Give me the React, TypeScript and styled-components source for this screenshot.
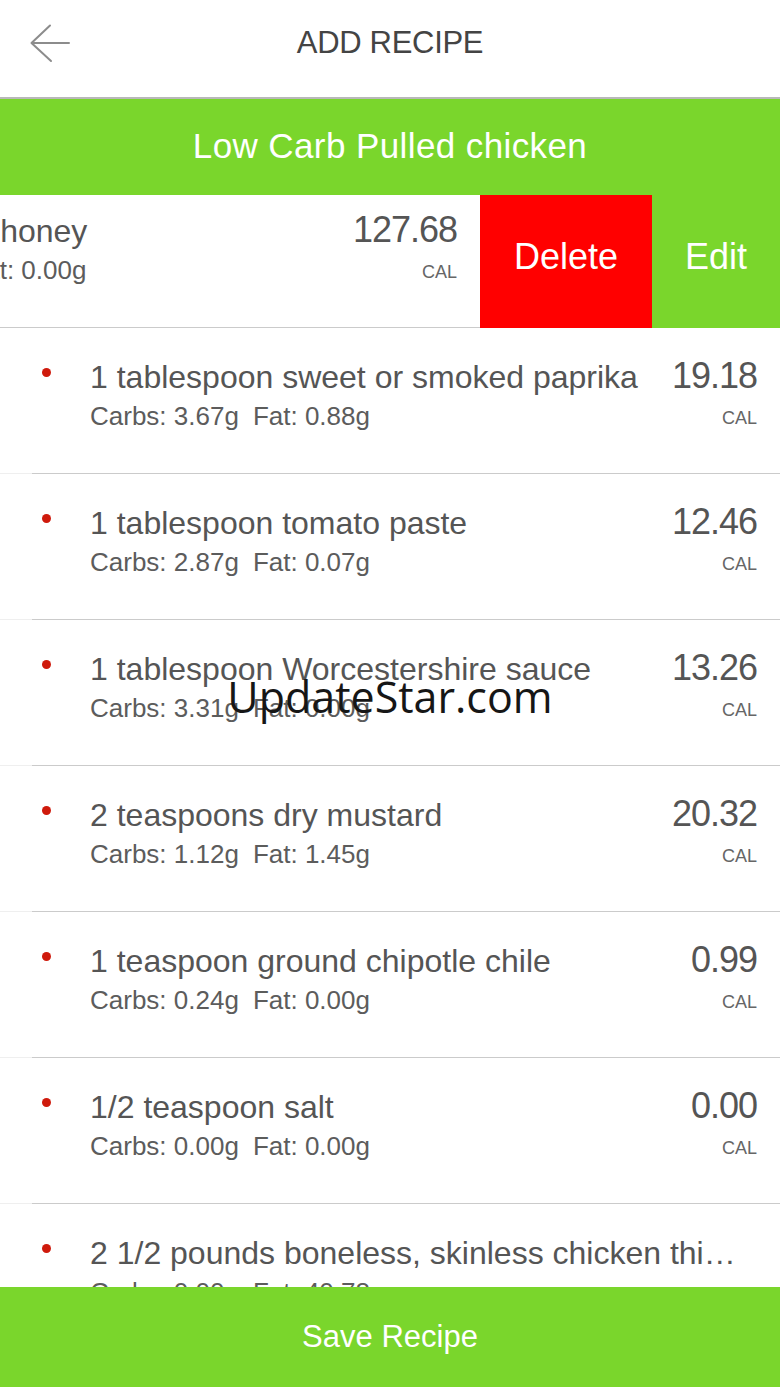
import React from 'react';
import styled, { createGlobalStyle } from 'styled-components';

const GREEN = '#7ad62c';

interface Ingredient {
	name: string;
	carbs: string;
	fat: string;
	cal?: string;
}

const swiped: Ingredient = { name: '2 tablespoons honey', carbs: '34.60g', fat: '0.00g', cal: '127.68' };

const ingredients: Ingredient[] = [
	{ name: '1 tablespoon sweet or smoked paprika', carbs: '3.67g', fat: '0.88g', cal: '19.18' },
	{ name: '1 tablespoon tomato paste', carbs: '2.87g', fat: '0.07g', cal: '12.46' },
	{ name: '1 tablespoon Worcestershire sauce', carbs: '3.31g', fat: '0.00g', cal: '13.26' },
	{ name: '2 teaspoons dry mustard', carbs: '1.12g', fat: '1.45g', cal: '20.32' },
	{ name: '1 teaspoon ground chipotle chile', carbs: '0.24g', fat: '0.00g', cal: '0.99' },
	{ name: '1/2 teaspoon salt', carbs: '0.00g', fat: '0.00g', cal: '0.00' },
	{ name: '2 1/2 pounds boneless, skinless chicken thighs, trimmed', carbs: '0.00g', fat: '40.78g' }
];

const GlobalStyle = createGlobalStyle`
  html, body { margin: 0; padding: 0; background: #fff; }
  body { font-family: "Liberation Sans", Arial, sans-serif; }
`;

const Screen = styled.div`
  position: relative;
  width: 780px;
  height: 1387px;
  display: flex;
  flex-direction: column;
  overflow: hidden;
  background: #fff;
`;

const Header = styled.header`
  flex: 0 0 97px;
  display: grid;
  grid-template-columns: 120px 1fr 120px;
  align-items: center;
  border-bottom: 2px solid #b8b8b8;
`;

const BackButton = styled.button`
  justify-self: start;
  margin: 0 0 10px 30px;
  padding: 0;
  border: 0;
  background: none;
  width: 40px;
  height: 40px;
  display: flex;
`;

const Title = styled.h1`
  margin: 0 0 12px;
  text-align: center;
  font-weight: 400;
  font-size: 31px;
  letter-spacing: -0.3px;
  color: #444;
`;

const RecipeBar = styled.div`
  flex: 0 0 96px;
  display: flex;
  align-items: center;
  justify-content: center;
  background: ${GREEN};
  color: #fff;
  font-size: 35px;
  letter-spacing: 0.4px;
  padding-bottom: 2px;
  box-sizing: border-box;
  position: relative;
  z-index: 1;
`;

const List = styled.div`
  flex: 1;
  overflow: hidden;
`;

const Scroller = styled.div`
  margin-top: -13px;
`;

const SwipeRow = styled.div`
  display: flex;
  height: 146px;
  overflow: hidden;
`;

const SwipeContent = styled.div`
  flex: 0 0 778px;
  margin-left: -298px;
`;

const ActionButton = styled.button<{ $bg: string; $w: number }>`
  flex: 0 0 ${p => p.$w}px;
  border: 0;
  padding: 4px 0 0;
  background: ${p => p.$bg};
  color: #fff;
  font-family: "Liberation Sans", Arial, sans-serif;
  font-size: 36px;
`;

const RowBody = styled.div`
  height: 145px;
  box-sizing: border-box;
  display: grid;
  grid-template-columns: 90px minmax(0, 1fr) auto;
  padding-right: 23px;
`;

const Dot = styled.span`
  justify-self: start;
  margin: 40px 0 0 42px;
  width: 9px;
  height: 9px;
  border-radius: 50%;
  background: #cf1a0c;
`;

const Info = styled.div<{ $wide?: boolean }>`
  padding-top: 31px;
  min-width: 0;
  grid-column: ${p => (p.$wide ? '2 / 4' : 'auto')};
  padding-right: ${p => (p.$wide ? '8px' : '0')};
`;

const Name = styled.div`
  font-size: 32px;
  line-height: 36px;
  color: #555;
  white-space: nowrap;
  overflow: hidden;
  text-overflow: ellipsis;
`;

const Macros = styled.div`
  margin-top: 6px;
  display: flex;
  gap: 14px;
  font-size: 26px;
  line-height: 30px;
  color: #5c5c5c;
  white-space: nowrap;
`;

const Calories = styled.div`
  padding-top: 28px;
  padding-left: 20px;
  display: flex;
  flex-direction: column;
  align-items: flex-end;
`;

const CalValue = styled.span`
  font-size: 36px;
  line-height: 40px;
  letter-spacing: -1px;
  color: #555;
`;

const CalUnit = styled.span`
  margin-top: 11px;
  font-size: 18px;
  line-height: 22px;
  color: #666;
`;

const Divider = styled.div`
  height: 1px;
  background: linear-gradient(to right, #efefef 32px, #cbcbcb 32px);
`;

const SaveButton = styled.button`
  flex: 0 0 100px;
  border: 0;
  background: ${GREEN};
  color: #fff;
  font-family: "Liberation Sans", Arial, sans-serif;
  font-size: 31px;
  padding-bottom: 2px;
  position: relative;
  z-index: 1;
`;

const Watermark = styled.div`
  position: absolute;
  left: 0;
  right: 0;
  top: 668px;
  text-align: center;
  font-family: "Open Sans", sans-serif;
  font-size: 43px;
  line-height: 58px;
  color: #161616;
  pointer-events: none;
  z-index: 2;
`;

const BackArrow = () => (
	<svg width='40' height='40' viewBox='0 0 40 40' fill='none' stroke='#8c8c8c' strokeWidth='2' strokeLinecap='round'>
		<path d='M39 19H1.5M1.5 19L20 1.5M1.5 19L21 37'/>
	</svg>
);

const RowBodyView = ({ item }: { item: Ingredient }) => (
	<RowBody>
		<Dot/>
		<Info $wide={!item.cal}>
			<Name>{item.name}</Name>
			<Macros>
				<span>Carbs: {item.carbs}</span>
				<span>Fat: {item.fat}</span>
			</Macros>
		</Info>
		{item.cal && <Calories>
			<CalValue>{item.cal}</CalValue>
			<CalUnit>CAL</CalUnit>
		</Calories>}
	</RowBody>
);

const App = () => {
	return <>
		<GlobalStyle/>
		<Screen>
			<Header>
				<BackButton aria-label='Back'><BackArrow/></BackButton>
				<Title>ADD RECIPE</Title>
				<span/>
			</Header>
			<RecipeBar>Low Carb Pulled chicken</RecipeBar>
			<List>
				<Scroller>
					<SwipeRow>
						<SwipeContent>
							<RowBodyView item={swiped}/>
							<Divider/>
						</SwipeContent>
						<ActionButton $bg='#ff0000' $w={172}>Delete</ActionButton>
						<ActionButton $bg={GREEN} $w={128}>Edit</ActionButton>
					</SwipeRow>
					{ingredients.map((item) => (
						<div key={item.name}>
							<RowBodyView item={item}/>
							<Divider/>
						</div>
					))}
				</Scroller>
			</List>
			<SaveButton>Save Recipe</SaveButton>
			<Watermark>UpdateStar.com</Watermark>
		</Screen>
	</>;
};

export default App;
